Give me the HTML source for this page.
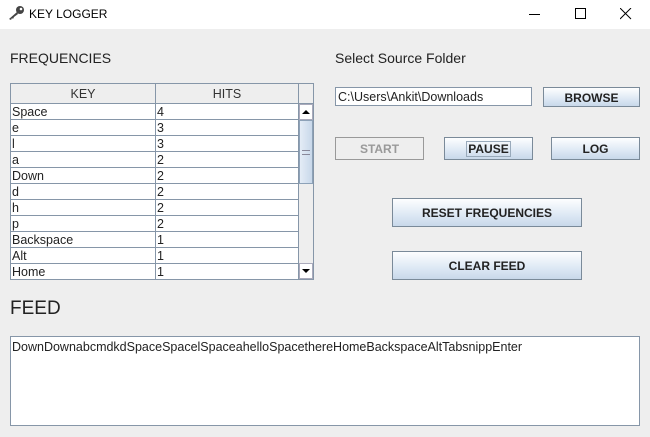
<!DOCTYPE html>
<html><head><style>
*{box-sizing:border-box;margin:0;padding:0}
body{width:650px;height:437px;background:#eeeeee;font-family:"Liberation Sans",sans-serif;position:relative;overflow:hidden;font-size:12px;color:#333}
.tb{position:absolute;left:0;top:0;width:650px;height:29px;background:#fff}
.a{position:absolute}
.btn{position:absolute;border:1px solid #7a8a99;background:linear-gradient(#fdfeff,#dde8f4 60%,#c8d8ea);font-weight:bold;font-size:12px;text-align:center;color:#222}
table{border-collapse:collapse}
td{border:1px solid #8696a8;height:16px;font-size:12.5px;padding:0 1px;line-height:14px;background:#fff;color:#222}
</style></head><body>
<div class="tb">
<svg class="a" style="left:7px;top:5px" width="18" height="16" viewBox="0 0 18 16"><circle cx="13" cy="5" r="4" fill="#444"/><circle cx="14" cy="4" r="1.3" fill="#fff"/><path d="M10 7 L2 14 L4 15 L5 13 L6 14 L7 12 L11 9Z" fill="#444"/></svg>
<div class="a" style="left:29px;top:7px;font-size:12px;color:#000">KEY LOGGER</div>
<div class="a" style="left:529px;top:14px;width:11px;height:1px;background:#000"></div>
<div class="a" style="left:575px;top:8px;width:11px;height:11px;border:1px solid #000"></div>
<svg class="a" style="left:620px;top:8px" width="12" height="12"><path d="M0 0L11 11M11 0L0 11" stroke="#000" stroke-width="1"/></svg>
</div>
<div class="a" style="left:10px;top:50px;font-size:14px;color:#222">FREQUENCIES</div>
<div class="a" style="left:335px;top:50px;font-size:14px;color:#222">Select Source Folder</div>
<div class="a" style="left:10px;top:83px;width:304px;height:197px;border:1px solid #8696a8;background:#fff;overflow:hidden">
<div class="a" style="left:0;top:0;width:302px;height:20px;background:#eeeeee;border-bottom:1px solid #8696a8"></div>
<div class="a" style="left:0;top:3px;width:144px;text-align:center;font-size:12.5px">KEY</div>
<div class="a" style="left:144px;top:0;width:1px;height:20px;background:#8696a8"></div>
<div class="a" style="left:145px;top:3px;width:142px;text-align:center;font-size:12.5px">HITS</div>
<div class="a" style="left:287px;top:0;width:1px;height:20px;background:#8696a8"></div>
<table class="a" style="left:-1px;top:19px;width:289px">
<tr><td style="width:145px">Space</td><td>4</td></tr><tr><td>e</td><td>3</td></tr><tr><td>l</td><td>3</td></tr><tr><td>a</td><td>2</td></tr><tr><td>Down</td><td>2</td></tr><tr><td>d</td><td>2</td></tr><tr><td>h</td><td>2</td></tr><tr><td>p</td><td>2</td></tr><tr><td>Backspace</td><td>1</td></tr><tr><td>Alt</td><td>1</td></tr><tr><td>Home</td><td>1</td></tr></table>
<div class="a" style="left:287px;top:20px;width:15px;height:176px;background:#eeeeee;border-left:1px solid #8696a8"></div>
<div class="a" style="left:288px;top:20px;width:14px;height:16px;background:#fff;border:1px solid #aab"></div>
<div class="a" style="left:291px;top:26px;border-left:4px solid transparent;border-right:4px solid transparent;border-bottom:4px solid #000"></div>
<div class="a" style="left:288px;top:36px;width:14px;height:64px;background:linear-gradient(90deg,#e4ecf6,#c8d8ea);border:1px solid #8da2b8"></div>
<div class="a" style="left:291px;top:66px;width:8px;height:5px;border-top:1px solid #889;border-bottom:1px solid #889"></div>
<div class="a" style="left:288px;top:179px;width:14px;height:16px;background:#fff;border:1px solid #aab"></div>
<div class="a" style="left:291px;top:185px;border-left:4px solid transparent;border-right:4px solid transparent;border-top:4px solid #000"></div>
</div>
<div class="a" style="left:335px;top:87px;width:197px;height:19px;background:#fff;border:1px solid #8696a8;padding:2px 2px;font-size:12.5px;color:#222">C:\Users\Ankit\Downloads</div>
<div class="btn" style="left:543px;top:87px;width:97px;height:20px;line-height:20px">BROWSE</div>
<div class="a" style="left:335px;top:137px;width:89px;height:23px;border:1px solid #999;font-weight:bold;font-size:12px;color:#999;text-align:center;line-height:23px">START</div>
<div class="btn" style="left:444px;top:137px;width:89px;height:23px;line-height:22px"><span style="border:1px solid #9ab;padding:0 1px">PAUSE</span></div>
<div class="btn" style="left:551px;top:137px;width:89px;height:23px;line-height:23px">LOG</div>
<div class="btn" style="left:392px;top:198px;width:190px;height:29px;line-height:29px">RESET FREQUENCIES</div>
<div class="btn" style="left:392px;top:251px;width:190px;height:29px;line-height:29px">CLEAR FEED</div>
<div class="a" style="left:10px;top:298px;font-size:19px;color:#222">FEED</div>
<div class="a" style="left:10px;top:336px;width:630px;height:90px;background:#fff;border:1px solid #8696a8;padding:3px 1px;font-size:12.5px;color:#222">DownDownabcmdkdSpaceSpacelSpaceahelloSpacethereHomeBackspaceAltTabsnippEnter</div>
</body></html>
